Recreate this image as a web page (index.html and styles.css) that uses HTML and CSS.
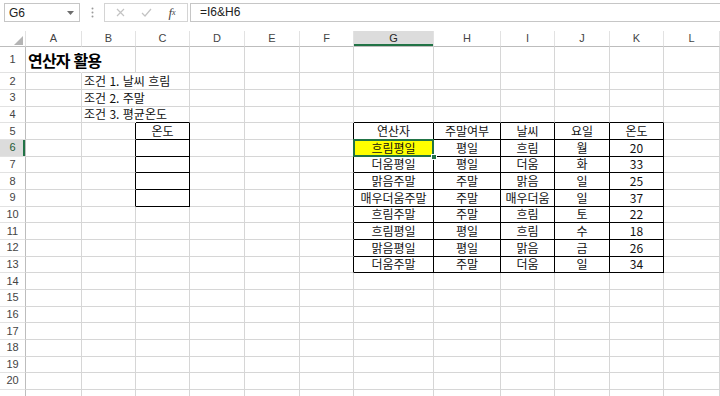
FILE: index.html
```html
<!DOCTYPE html>
<html lang="ko">

<head>
    <meta charset="UTF-8">
    <meta name="viewport" content="width=device-width, initial-scale=1.0">
    <title>연산자 활용</title>
    <link rel="stylesheet" href="styles.css">
</head>

<body>
    <div class="formula-bar">
        <div class="name-box">
            <span>G6</span>
            <svg width="7" height="4" viewBox="0 0 7 4"><polygon points="0,0 7,0 3.5,4" fill="#6d6d6d"/></svg>
        </div>
        <div class="grip">
            <svg width="3" height="11" viewBox="0 0 3 11"><circle cx="1.5" cy="1.5" r="1" fill="#9a9a9a"/><circle cx="1.5" cy="5.5" r="1" fill="#9a9a9a"/><circle cx="1.5" cy="9.5" r="1" fill="#9a9a9a"/></svg>
        </div>
        <div class="fx-box">
            <span class="btn">
                <svg width="9" height="9" viewBox="0 0 9 9"><path d="M1 1L8 8M8 1L1 8" stroke="#c3c3c3" stroke-width="1.2"/></svg>
            </span>
            <span class="btn">
                <svg width="11" height="9" viewBox="0 0 11 9"><path d="M1 5L4 8L10 1" stroke="#c3c3c3" stroke-width="1.2" fill="none"/></svg>
            </span>
            <span class="btn fx"><i>f</i><sub>x</sub></span>
        </div>
        <div class="formula-input">=I6&amp;H6</div>
    </div>

    <table class="sheet">
        <colgroup>
            <col class="c-head">
            <col style="width:56px">
            <col style="width:54px">
            <col style="width:54px">
            <col style="width:55px">
            <col style="width:55px">
            <col style="width:54px">
            <col style="width:80px">
            <col style="width:67px">
            <col style="width:54px">
            <col style="width:55px">
            <col style="width:54px">
            <col style="width:56px">
        </colgroup>
        <thead>
            <tr>
                <th class="corner"><svg width="9" height="9" viewBox="0 0 9 9"><polygon points="9,0 9,9 0,9" fill="#b4b4b4"/></svg></th>
                <th>A</th><th>B</th><th>C</th><th>D</th><th>E</th><th>F</th>
                <th class="on">G</th><th>H</th><th>I</th><th>J</th><th>K</th><th>L</th>
            </tr>
        </thead>
        <tbody>
            <tr class="r1">
                <th>1</th><td class="title spill">연산자 활용</td>
                <td></td><td></td><td></td><td></td><td></td><td></td><td></td><td></td><td></td><td></td><td></td>
            </tr>
            <tr>
                <th>2</th><td></td><td class="spill">조건 1. 날씨 흐림</td>
                <td></td><td></td><td></td><td></td><td></td><td></td><td></td><td></td><td></td><td></td>
            </tr>
            <tr>
                <th>3</th><td></td><td class="spill">조건 2. 주말</td>
                <td></td><td></td><td></td><td></td><td></td><td></td><td></td><td></td><td></td><td></td>
            </tr>
            <tr>
                <th>4</th><td></td><td class="spill">조건 3. 평균온도</td><td class="box-t"></td><td></td><td></td><td></td>
                <td class="box-t"></td><td class="box-t"></td><td class="box-t"></td><td class="box-t"></td><td class="box-t"></td><td></td>
            </tr>
            <tr>
                <th>5</th><td></td><td class="box-l"></td><td class="box">온도</td><td></td><td></td><td class="box-l"></td>
                <td class="box">연산자</td><td class="box">주말여부</td><td class="box">날씨</td><td class="box">요일</td><td class="box">온도</td><td></td>
            </tr>
            <tr class="on">
                <th>6</th><td></td><td class="box-l"></td><td class="box"></td><td></td><td></td><td class="box-l"></td>
                <td class="box sel">흐림평일</td><td class="box">평일</td><td class="box">흐림</td><td class="box">월</td><td class="box">20</td><td></td>
            </tr>
            <tr>
                <th>7</th><td></td><td class="box-l"></td><td class="box"></td><td></td><td></td><td class="box-l"></td>
                <td class="box">더움평일</td><td class="box">평일</td><td class="box">더움</td><td class="box">화</td><td class="box">33</td><td></td>
            </tr>
            <tr>
                <th>8</th><td></td><td class="box-l"></td><td class="box"></td><td></td><td></td><td class="box-l"></td>
                <td class="box">맑음주말</td><td class="box">주말</td><td class="box">맑음</td><td class="box">일</td><td class="box">25</td><td></td>
            </tr>
            <tr>
                <th>9</th><td></td><td class="box-l"></td><td class="box"></td><td></td><td></td><td class="box-l"></td>
                <td class="box">매우더움주말</td><td class="box">주말</td><td class="box">매우더움</td><td class="box">일</td><td class="box">37</td><td></td>
            </tr>
            <tr>
                <th>10</th><td></td><td></td><td></td><td></td><td></td><td class="box-l"></td>
                <td class="box">흐림주말</td><td class="box">주말</td><td class="box">흐림</td><td class="box">토</td><td class="box">22</td><td></td>
            </tr>
            <tr>
                <th>11</th><td></td><td></td><td></td><td></td><td></td><td class="box-l"></td>
                <td class="box">흐림평일</td><td class="box">평일</td><td class="box">흐림</td><td class="box">수</td><td class="box">18</td><td></td>
            </tr>
            <tr>
                <th>12</th><td></td><td></td><td></td><td></td><td></td><td class="box-l"></td>
                <td class="box">맑음평일</td><td class="box">평일</td><td class="box">맑음</td><td class="box">금</td><td class="box">26</td><td></td>
            </tr>
            <tr>
                <th>13</th><td></td><td></td><td></td><td></td><td></td><td class="box-l"></td>
                <td class="box">더움주말</td><td class="box">주말</td><td class="box">더움</td><td class="box">일</td><td class="box">34</td><td></td>
            </tr>
            <tr>
                <th>14</th><td></td><td></td><td></td><td></td><td></td><td></td><td></td><td></td><td></td><td></td><td></td><td></td>
            </tr>
            <tr>
                <th>15</th><td></td><td></td><td></td><td></td><td></td><td></td><td></td><td></td><td></td><td></td><td></td><td></td>
            </tr>
            <tr>
                <th>16</th><td></td><td></td><td></td><td></td><td></td><td></td><td></td><td></td><td></td><td></td><td></td><td></td>
            </tr>
            <tr>
                <th>17</th><td></td><td></td><td></td><td></td><td></td><td></td><td></td><td></td><td></td><td></td><td></td><td></td>
            </tr>
            <tr>
                <th>18</th><td></td><td></td><td></td><td></td><td></td><td></td><td></td><td></td><td></td><td></td><td></td><td></td>
            </tr>
            <tr>
                <th>19</th><td></td><td></td><td></td><td></td><td></td><td></td><td></td><td></td><td></td><td></td><td></td><td></td>
            </tr>
            <tr>
                <th>20</th><td></td><td></td><td></td><td></td><td></td><td></td><td></td><td></td><td></td><td></td><td></td><td></td>
            </tr>
            <tr>
                <th></th><td></td><td></td><td></td><td></td><td></td><td></td><td></td><td></td><td></td><td></td><td></td><td></td>
            </tr>
        </tbody>
    </table>
</body>

</html>
```

FILE: styles.css
```css
* {
    margin: 0;
    padding: 0;
}

html,
body {
    width: 720px;
    height: 396px;
    overflow: hidden;
    background-color: #fff;
}

body {
    font-family: "Noto Sans CJK KR", "Noto Sans", sans-serif;
    color: #111;
}

/* 수식 입력줄 */
.formula-bar {
    display: flex;
    height: 19px;
    padding: 3px 0 0 4px;
    margin-bottom: 8.7px;
}

.name-box {
    display: flex;
    align-items: center;
    justify-content: space-between;
    box-sizing: border-box;
    width: 76px;
    padding: 0 5px 0 4px;
    border: 1px solid #c6c6c6;
    font-family: "Liberation Sans", sans-serif;
    font-size: 12px;
    color: #222;
}

.grip {
    display: flex;
    align-items: center;
    justify-content: center;
    width: 24px;
}

.fx-box {
    display: flex;
    align-items: center;
    box-sizing: border-box;
    width: 84px;
    padding-left: 2px;
    border: 1px solid #d4d4d4;
}

.fx-box .btn {
    display: flex;
    align-items: center;
    justify-content: center;
    width: 26px;
}

.fx-box .fx {
    font-family: "Liberation Serif", serif;
    font-size: 13px;
    color: #444;
}

.fx-box .fx sub {
    font-size: 8px;
    font-style: italic;
    vertical-align: -1px;
}

.formula-input {
    flex: 1;
    box-sizing: border-box;
    margin-left: 2px;
    padding-left: 9px;
    border: 1px solid #c6c6c6;
    border-right: 0;
    font-family: "Liberation Sans", sans-serif;
    font-size: 12px;
    line-height: 17px;
    color: #222;
}

/* 시트 */
.sheet {
    table-layout: fixed;
    width: 720px;
    border-collapse: separate;
    border-spacing: 0;
}

.sheet .c-head {
    width: 26px;
}

.sheet th,
.sheet td {
    padding: 0 2px 1px;
    border-right: 1px solid #d6d6d6;
    border-bottom: 1px solid #d6d6d6;
    white-space: nowrap;
    overflow: visible;
    font-size: 12px;
    line-height: 14px;
    vertical-align: bottom;
}

.sheet thead tr {
    height: 16px;
}

.sheet thead th {
    padding: 0;
    border-right-color: #e2e2e2;
    border-bottom-color: #bdbdbd;
    font-family: "Liberation Sans", sans-serif;
    font-size: 11px;
    font-weight: normal;
    line-height: 15px;
    color: #444;
    text-align: center;
    vertical-align: middle;
}

.sheet thead th.on {
    background-color: #dcdcdc;
    box-shadow: inset 0 -2px 0 #217346;
    color: #262626;
}

.sheet thead th.corner {
    padding: 0 2px 1px 0;
    text-align: right;
    vertical-align: bottom;
    line-height: 0;
}

.sheet tbody tr {
    height: 16.67px;
}

.sheet tbody tr.r1 {
    height: 26.67px;
}

.sheet tbody th {
    padding: 0;
    border-right-color: #bdbdbd;
    border-bottom-color: #e2e2e2;
    font-family: "Liberation Sans", sans-serif;
    font-size: 11px;
    font-weight: normal;
    line-height: 15px;
    color: #444;
    text-align: center;
    vertical-align: middle;
}

.sheet tbody tr.on th {
    background-color: #dcdcdc;
    box-shadow: inset -2px 0 0 #217346;
    color: #1d5b37;
}

/* 셀 */
.sheet td.title {
    padding-left: 2px;
    font-size: 16px;
    font-weight: bold;
    letter-spacing: -0.8px;
    line-height: 22px;
    color: #000;
}

.sheet td.spill {
    border-right-color: transparent;
}

.sheet td.box {
    border-right-color: #000;
    border-bottom-color: #000;
    text-align: center;
}

.sheet td.box-l {
    border-right-color: #000;
}

.sheet td.box-t {
    border-bottom-color: #000;
}

.sheet td.sel {
    position: relative;
    background-color: #ff0;
}

.sheet td.sel::after {
    content: "";
    position: absolute;
    left: -1px;
    top: -1px;
    right: -1px;
    bottom: -1px;
    border: 2px solid #217346;
}

.sheet td.sel::before {
    content: "";
    position: absolute;
    right: -4px;
    bottom: -4px;
    z-index: 1;
    width: 4px;
    height: 4px;
    border: 1px solid #fff;
    background-color: #217346;
}
```
